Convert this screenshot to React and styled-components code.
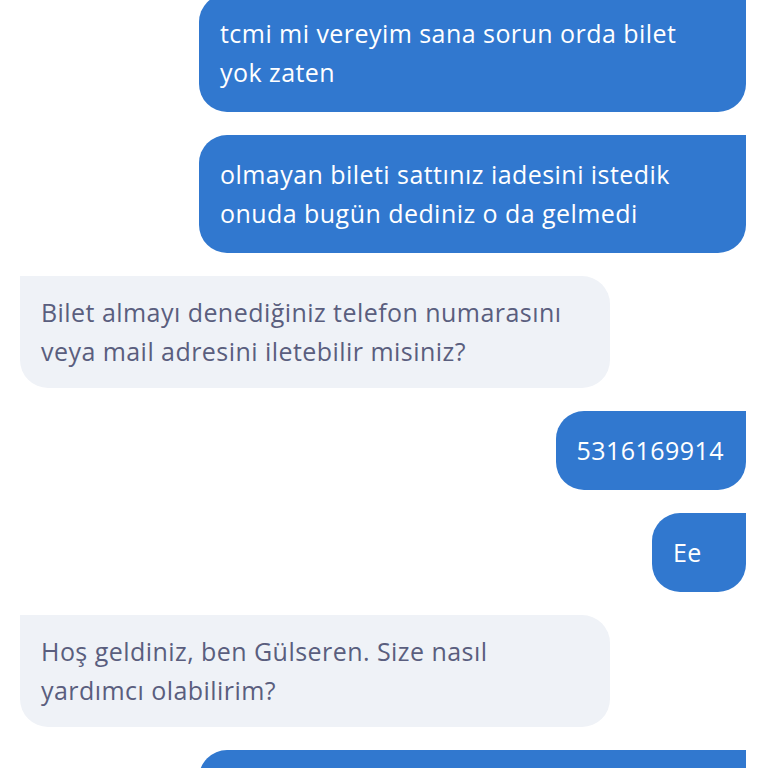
import React from "react"
import styled, { createGlobalStyle } from "styled-components"

const GlobalStyle = createGlobalStyle`
  html, body {
    margin: 0;
    padding: 0;
    background: #ffffff;
    overflow: hidden;
  }
  body {
    font-family: "Open Sans", "Noto Sans", sans-serif;
  }
`

const Thread = styled.div`
  display: flex;
  flex-direction: column;
  gap: 23px;
  padding: 0 22px 0 20px;
  margin-top: -6px;
  height: 774px;
  overflow: hidden;
`

const Row = styled.div`
  display: flex;
  justify-content: ${({ mine }) => (mine ? "flex-end" : "flex-start")};
`

const Bubble = styled.div`
  box-sizing: border-box;
  max-width: ${({ mine }) => (mine ? "547px" : "590px")};
  min-width: 94px;
  padding: ${({ mine }) => (mine ? "20px 22px 20px 21px" : "17px 21px")};
  font-size: 25px;
  line-height: 39px;
  letter-spacing: 0.45px;
  color: ${({ mine }) => (mine ? "#ffffff" : "#5a5e7e")};
  background: ${({ mine }) => (mine ? "#3178cf" : "#eff2f7")};
  border-radius: ${({ mine }) => (mine ? "28px 0 28px 28px" : "0 28px 28px 28px")};
`

const PendingBubble = styled(Bubble)`
  width: 547px;
  height: 118px;
`

const messages = [
  { mine: true, text: "tcmi mi vereyim sana sorun orda bilet yok zaten" },
  { mine: true, text: "olmayan bileti sattınız iadesini istedik onuda bugün dediniz o da gelmedi" },
  { mine: false, text: "Bilet almayı denediğiniz telefon numarasını veya mail adresini iletebilir misiniz?" },
  { mine: true, text: "5316169914" },
  { mine: true, text: "Ee" },
  { mine: false, text: "Hoş geldiniz, ben Gülseren. Size nasıl yardımcı olabilirim?" },
]

const App = () => (
  <>
    <GlobalStyle />
    <Thread>
      {messages.map((m, i) => (
        <Row key={i} mine={m.mine}>
          <Bubble mine={m.mine}>{m.text}</Bubble>
        </Row>
      ))}
      <Row mine>
        <PendingBubble mine />
      </Row>
    </Thread>
  </>
)

export default App
